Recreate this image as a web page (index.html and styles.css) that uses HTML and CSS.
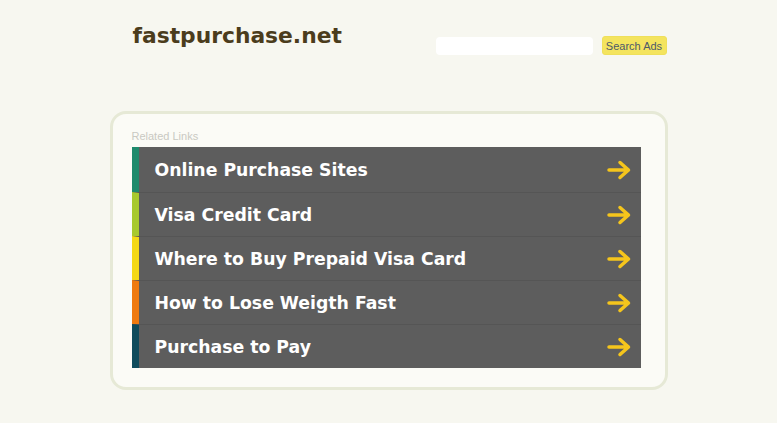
FILE: index.html
```html
<!DOCTYPE html>
<html lang="en">
<head>
    <meta charset="UTF-8">
    <title>fastpurchase.net</title>
    <link rel="stylesheet" href="styles.css">
</head>
<body>

    <div id="page">
        <div class="header">
            <h1 class="logo">fastpurchase.net</h1>
            <form class="search">
                <input type="text" class="search-input">
                <button type="button" class="search-btn">Search Ads</button>
            </form>
        </div>

        <div class="box">
            <p class="box-title">Related Links</p>
            <ul class="links">
                <li class="c1"><span>Online Purchase Sites</span><svg class="arrow" viewBox="0 0 26 20"><path d="M2 10H21M13 2.5L21.5 10L13 17.5"/></svg></li>
                <li class="c2"><span>Visa Credit Card</span><svg class="arrow" viewBox="0 0 26 20"><path d="M2 10H21M13 2.5L21.5 10L13 17.5"/></svg></li>
                <li class="c3"><span>Where to Buy Prepaid Visa Card</span><svg class="arrow" viewBox="0 0 26 20"><path d="M2 10H21M13 2.5L21.5 10L13 17.5"/></svg></li>
                <li class="c4"><span>How to Lose Weigth Fast</span><svg class="arrow" viewBox="0 0 26 20"><path d="M2 10H21M13 2.5L21.5 10L13 17.5"/></svg></li>
                <li class="c5"><span>Purchase to Pay</span><svg class="arrow" viewBox="0 0 26 20"><path d="M2 10H21M13 2.5L21.5 10L13 17.5"/></svg></li>
            </ul>
        </div>
    </div>

</body>
</html>
```

FILE: styles.css
```css
body {
    margin: 0;
    background-color: #f7f7f0;
    font-family: "DejaVu Sans", Verdana, sans-serif;
}
#page {
    width: 558px;
    margin: 0 auto;
    padding-top: 21px;
}

/* header */
.header {
    display: flex;
    justify-content: space-between;
    align-items: flex-start;
    height: 90px;
}
.logo {
    margin: 0 0 0 23px;
    font-size: 21.8px;
    font-weight: bold;
    color: #4b3c1c;
    line-height: 30px;
}
.search {
    display: flex;
    gap: 9px;
    margin-top: 15px;
    margin-right: 1px;
}
.search-input {
    width: 157px;
    height: 18px;
    padding: 0;
    border: none;
    border-radius: 4px;
    background-color: #fff;
    margin-top: 1px;
}
.search-btn {
    width: 65px;
    height: 19px;
    padding: 0;
    border: 1px solid #efe05a;
    border-radius: 3px;
    background-color: #f4e45e;
    color: #4d5a6a;
    font-family: "Liberation Sans", Arial, sans-serif;
    font-size: 11px;
}

/* related links */
.box {
    border: 3px solid #e6e9d6;
    border-radius: 16px;
    background-color: #fbfbf6;
    padding: 16px 24px 19px 19px;
}
.box-title {
    margin: 0 0 4px 0;
    font-family: "Liberation Sans", Arial, sans-serif;
    font-size: 11px;
    color: #c9c9c2;
    line-height: 13px;
}
.links {
    list-style: none;
    margin: 0;
    padding: 0;
}
.links li {
    box-sizing: border-box;
    display: flex;
    align-items: center;
    justify-content: space-between;
    height: 44px;
    background-color: #5d5d5d;
    border-left: 7px solid #1e8a6c;
    border-top: 1px solid #555;
    padding: 0 8px 0 16px;
    color: #fff;
    font-size: 17.3px;
    font-weight: bold;
}
.links li:first-child {
    border-top: none;
    height: 45px;
}
.links li.c2 { border-left-color: #a8c92e; }
.links li.c3 { border-left-color: #f4d916; }
.links li.c4 { border-left-color: #ef7a10; }
.links li.c5 { border-left-color: #0f4b5c; }
.arrow {
    width: 26px;
    height: 20px;
    fill: none;
    stroke: #f5c51c;
    stroke-width: 3.5;
    stroke-linecap: round;
    stroke-linejoin: round;
}
```
